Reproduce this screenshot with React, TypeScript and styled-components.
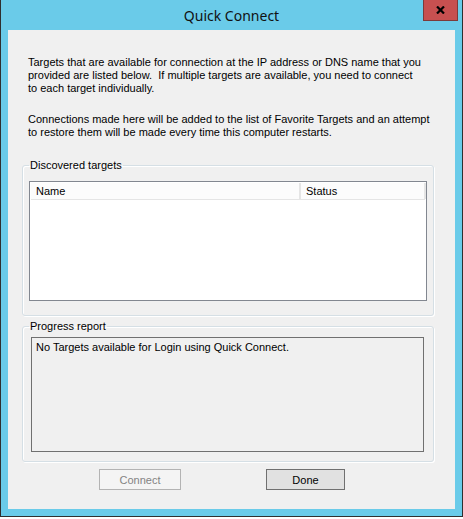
import React from "react";
import styled, { createGlobalStyle } from "styled-components";

const Global = createGlobalStyle`
  html, body { margin: 0; padding: 0; background: #ffffff; }
  body { font-family: "Liberation Sans", Arial, sans-serif; }
`;

const Window = styled.div`
  box-sizing: border-box;
  width: 463px;
  height: 517px;
  background: #6acbe9;
  border: 1px solid #2f2f2f;
  border-top: none;
  padding: 0 7px 7px 7px;
  display: flex;
  flex-direction: column;
`;

const TitleBar = styled.div`
  height: 30px;
  margin: 0 -7px;
  display: grid;
  grid-template-columns: 1fr auto 1fr;
  align-items: start;
`;

const Title = styled.div`
  grid-column: 2;
  font-family: "Noto Sans", "Open Sans", sans-serif;
  font-size: 14px;
  line-height: 31px;
  color: #111;
`;

const CloseButton = styled.div`
  grid-column: 3;
  justify-self: end;
  margin-right: 4px;
  box-sizing: border-box;
  width: 35px;
  height: 21px;
  background: #c75050;
  border: 1px solid #7d3a3a;
  border-top: none;
  display: flex;
  align-items: center;
  justify-content: center;
`;

const Client = styled.div`
  flex: 1;
  background: #f0f0f0;
  display: flex;
  flex-direction: column;
  font-size: 11px;
  line-height: 13px;
  color: #000;
`;

const Para = styled.p<{ $top: number }>`
  margin: ${(p) => p.$top}px 0 0 20px;
  white-space: nowrap;
`;

const Group = styled.fieldset<{ $top: number; $pad: string }>`
  box-sizing: border-box;
  width: 412px;
  margin: ${(p) => p.$top}px 0 0 14px;
  padding: ${(p) => p.$pad};
  border: 1px solid #d5dfe5;
  border-radius: 3px;
  box-shadow: 1px 1px 0 #ffffff, inset 1px 1px 0 #ffffff;
  min-width: 0;
`;

const Legend = styled.legend<{ $shift: number }>`
  margin-left: ${(p) => p.$shift}px;
  padding: 0 1px;
  font-size: 11px;
  line-height: 13px;
`;

const ListView = styled.div`
  box-sizing: border-box;
  height: 120px;
  border: 1px solid #828790;
  background: #ffffff;
  padding: 1px;
`;

const Header = styled.div`
  display: grid;
  grid-template-columns: 270px 125px;
  height: 16px;
  border-bottom: 1px solid #e5e5e5;
  background: #fcfcfc;
`;

const HeaderCell = styled.div`
  box-sizing: border-box;
  padding-left: 5px;
  line-height: 16px;
  border-right: 2px solid #e5e5e5;
`;

const ReportBox = styled.div`
  box-sizing: border-box;
  height: 115px;
  width: 393px;
  border: 1px solid #707070;
  padding: 3px 4px;
`;

const ButtonRow = styled.div`
  display: flex;
  margin: 7px 0 0 91px;
  gap: 85px;
`;

const Button = styled.div<{ $w: number; $disabled?: boolean }>`
  box-sizing: border-box;
  width: ${(p) => p.$w}px;
  height: 21px;
  display: flex;
  align-items: center;
  justify-content: center;
  padding-top: 1px;
  font-size: 11px;
  background: ${(p) => (p.$disabled ? "#f4f4f4" : "#e1e1e1")};
  border: 1px solid ${(p) => (p.$disabled ? "#b3b3b3" : "#707070")};
  color: ${(p) => (p.$disabled ? "#838383" : "#000")};
`;

export default function App() {
  return (
    <>
      <Global />
      <Window>
        <TitleBar>
          <Title>Quick Connect</Title>
          <CloseButton>
            <svg width="9" height="8" viewBox="0 0 9 8">
              <path d="M1 0.5 L8 7.5 M8 0.5 L1 7.5" stroke="#000" strokeWidth="2.2" />
            </svg>
          </CloseButton>
        </TitleBar>
        <Client>
          <Para $top={26}>
            Targets that are available for connection at the IP address or DNS name that you
            <br />
            provided are listed below.&nbsp; If multiple targets are available, you need to connect
            <br />
            to each target individually.
          </Para>
          <Para $top={18}>
            Connections made here will be added to the list of Favorite Targets and an attempt
            <br />
            to restore them will be made every time this computer restarts.
          </Para>
          <Group $top={20} $pad="9px 6px 14px 6px">
            <Legend $shift={0}>Discovered targets</Legend>
            <ListView>
              <Header>
                <HeaderCell>Name</HeaderCell>
                <HeaderCell>Status</HeaderCell>
              </Header>
            </ListView>
          </Group>
          <Group $top={4} $pad="4px 9px 9px 8px">
            <Legend $shift={-2}>Progress report</Legend>
            <ReportBox>No Targets available for Login using Quick Connect.</ReportBox>
          </Group>
          <ButtonRow>
            <Button $w={82} $disabled>
              Connect
            </Button>
            <Button $w={79}>Done</Button>
          </ButtonRow>
        </Client>
      </Window>
    </>
  );
}
